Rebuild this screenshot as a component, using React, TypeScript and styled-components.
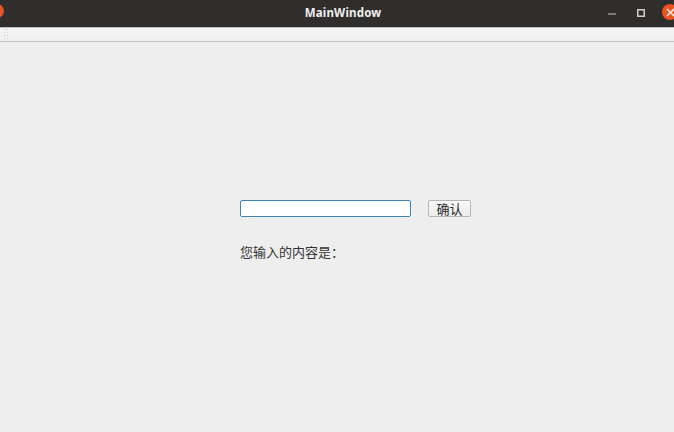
import React from "react";
import styled, { createGlobalStyle } from "styled-components";

const GlobalStyle = createGlobalStyle`
  html, body {
    margin: 0;
    padding: 0;
    height: 100%;
    overflow: hidden;
    background: #eeeeee;
  }
`;

const Window = styled.div`
  width: 674px;
  height: 432px;
  display: flex;
  flex-direction: column;
  overflow: hidden;
  background: #eeeeee;
  font-family: "Noto Sans CJK SC", "Noto Sans", sans-serif;
`;

const TitleBar = styled.header`
  position: relative;
  flex: none;
  height: 28px;
  display: flex;
  align-items: center;
  justify-content: center;
  padding-left: 12px;
  background: #302e2d;
  box-sizing: border-box;
  border-bottom: 1px solid #bdbdbb;
`;

const Title = styled.span`
  font-family: "Noto Sans", "DejaVu Sans", sans-serif;
  font-size: 11.5px;
  font-weight: 700;
  color: #f0efee;
  letter-spacing: 0.2px;
  margin-top: -3px;
`;

const LeftDot = styled.span`
  position: absolute;
  left: -10px;
  top: 4px;
  width: 14px;
  height: 14px;
  border-radius: 50%;
  background: #e95420;
`;

const WindowControls = styled.div`
  position: absolute;
  right: 0;
  top: 4px;
  width: 66px;
  height: 16px;
`;

const ControlIcon = styled.svg<{ $left: number; $top: number }>`
  position: absolute;
  left: ${(p) => p.$left}px;
  top: ${(p) => p.$top}px;
  display: block;
`;

const CloseDot = styled.span`
  position: absolute;
  left: 54px;
  top: 0;
  width: 16px;
  height: 16px;
  border-radius: 50%;
  background: #e95420;
  display: flex;
  align-items: center;
  justify-content: center;
`;

const ToolBar = styled.div`
  flex: none;
  height: 14px;
  box-sizing: border-box;
  display: flex;
  background: linear-gradient(#f5f5f5, #f0f0f0);
  border-bottom: 1px solid #c4c4c4;
`;

const Grip = styled.span`
  width: 5px;
  height: 12px;
  margin-left: 3px;
  background-image: radial-gradient(#d2d2d2 1px, transparent 1px);
  background-size: 3px 3px;
`;

const Content = styled.main`
  flex: 1;
  display: flex;
  flex-direction: column;
  align-items: flex-start;
  gap: 26px;
  padding: 158px 0 0 240px;
`;

const InputRow = styled.div`
  display: flex;
  align-items: center;
  gap: 17px;
`;

const TextInput = styled.input`
  width: 171px;
  height: 17px;
  box-sizing: border-box;
  padding: 0 4px;
  background: #ffffff;
  border: 1px solid #3d85b8;
  border-radius: 2px;
  outline: none;
`;

const ConfirmButton = styled.button`
  width: 43px;
  height: 17px;
  box-sizing: border-box;
  padding: 0;
  display: flex;
  align-items: center;
  justify-content: center;
  font-family: inherit;
  font-size: 13px;
  line-height: 15px;
  color: #2a2a2a;
  background: linear-gradient(#f8f8f8, #ececec);
  border: 1px solid #b5b5b5;
  border-radius: 2px;
`;

const Output = styled.p`
  margin: 0;
  font-size: 13px;
  line-height: 18px;
  color: #333333;
`;

export default function App() {
  return (
    <Window>
      <GlobalStyle />
      <TitleBar>
        <LeftDot />
        <Title>MainWindow</Title>
        <WindowControls>
          <ControlIcon $left={0} $top={9} width="8" height="2" viewBox="0 0 8 2">
            <rect width="8" height="1" y="0.5" fill="#c9c8c7" />
          </ControlIcon>
          <ControlIcon $left={29} $top={5} width="8" height="8" viewBox="0 0 8 8">
            <rect x="0.75" y="0.75" width="6.5" height="6.5" fill="none" stroke="#d0cfce" strokeWidth="1.5" />
          </ControlIcon>
          <CloseDot>
            <svg width="9" height="9" viewBox="0 0 9 9">
              <path d="M1 1 L8 8 M8 1 L1 8" stroke="#fbe6dd" strokeWidth="1.6" />
            </svg>
          </CloseDot>
        </WindowControls>
      </TitleBar>
      <ToolBar>
        <Grip />
      </ToolBar>
      <Content>
        <InputRow>
          <TextInput type="text" />
          <ConfirmButton>确认</ConfirmButton>
        </InputRow>
        <Output>您输入的内容是：</Output>
      </Content>
    </Window>
  );
}
